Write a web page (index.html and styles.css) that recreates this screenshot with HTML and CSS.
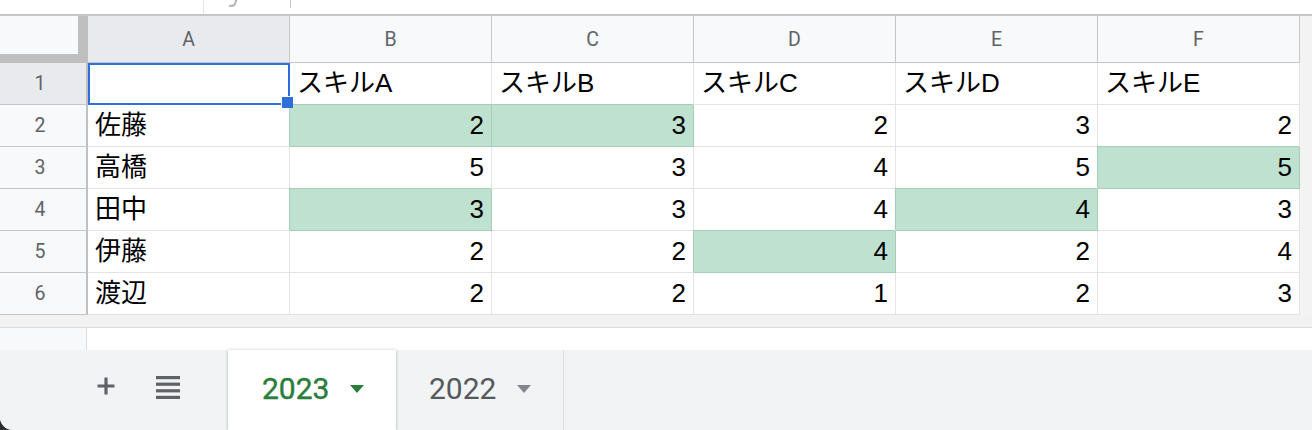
FILE: index.html
```html
<!DOCTYPE html>
<html lang="ja">
<head>
<meta charset="utf-8">
<title>Sheet</title>
<link rel="stylesheet" href="styles.css">
</head>
<body>
<div class="app">
  <div class="toolbar">
    <span class="tb-line tb-line1"></span>
    <svg class="fx-tail" width="14" height="8" viewBox="0 0 14 8"><path d="M9 0 C8.6 4.5 7 6.6 3 5.8" fill="none" stroke="#b4b7bb" stroke-width="2.2" stroke-linecap="round"/></svg>
    <span class="tb-line tb-line2"></span>
  </div>
  <div class="sheet-area">
    <div class="grid">
      <div class="corner"><div class="corner-inner"></div></div>
      <div class="colhead sel">A</div>
      <div class="colhead">B</div>
      <div class="colhead">C</div>
      <div class="colhead">D</div>
      <div class="colhead">E</div>
      <div class="colhead">F</div>

      <div class="rowhead sel">1</div>
      <div class="cell a1"></div>
      <div class="cell">スキルA</div>
      <div class="cell">スキルB</div>
      <div class="cell">スキルC</div>
      <div class="cell">スキルD</div>
      <div class="cell">スキルE</div>

      <div class="rowhead">2</div>
      <div class="cell">佐藤</div>
      <div class="cell num hi">2</div>
      <div class="cell num hi">3</div>
      <div class="cell num">2</div>
      <div class="cell num">3</div>
      <div class="cell num">2</div>

      <div class="rowhead">3</div>
      <div class="cell">高橋</div>
      <div class="cell num">5</div>
      <div class="cell num">3</div>
      <div class="cell num">4</div>
      <div class="cell num">5</div>
      <div class="cell num hi">5</div>

      <div class="rowhead">4</div>
      <div class="cell">田中</div>
      <div class="cell num hi">3</div>
      <div class="cell num">3</div>
      <div class="cell num">4</div>
      <div class="cell num hi">4</div>
      <div class="cell num">3</div>

      <div class="rowhead">5</div>
      <div class="cell">伊藤</div>
      <div class="cell num">2</div>
      <div class="cell num">2</div>
      <div class="cell num hi">4</div>
      <div class="cell num">2</div>
      <div class="cell num">4</div>

      <div class="rowhead">6</div>
      <div class="cell">渡辺</div>
      <div class="cell num">2</div>
      <div class="cell num">2</div>
      <div class="cell num">1</div>
      <div class="cell num">2</div>
      <div class="cell num">3</div>
    </div>
    <div class="vstrip"></div>
  </div>
  <div class="band"></div>
  <div class="blank"><div class="blank-head"></div></div>
  <div class="tabbar">
    <div class="tab-tools">
      <svg class="ico-plus" width="20" height="20" viewBox="0 0 20 20"><path d="M10 1.5v17M1.5 10h17" stroke="#5f6368" stroke-width="3.2" fill="none"/></svg>
      <svg class="ico-menu" width="24" height="24" viewBox="0 0 24 24"><rect x="0" y="1" width="24" height="3.2" fill="#5f6368"/><rect x="0" y="7.6" width="24" height="3.2" fill="#5f6368"/><rect x="0" y="14.2" width="24" height="3.2" fill="#5f6368"/><rect x="0" y="20.8" width="24" height="3.2" fill="#5f6368"/></svg>
    </div>
    <div class="tab active">
      <span class="tab-label">2023</span>
      <span class="tab-arrow"></span>
    </div>
    <div class="tab">
      <span class="tab-label">2022</span>
      <span class="tab-arrow"></span>
    </div>
  </div>
</div>
</body>
</html>
```
FILE: styles.css
```css
* { box-sizing: border-box; }
html, body { margin: 0; padding: 0; }
html { background: #2e2e2e; }
body { width: 1312px; height: 430px; overflow: hidden; }

.app {
  width: 1312px;
  height: 430px;
  background: #ffffff;
  border-bottom-left-radius: 13px;
  overflow: hidden;
  display: flex;
  flex-direction: column;
}

.toolbar {
  height: 14px;
  display: flex;
  align-items: flex-start;
  flex: none;
}
.tb-line { display: block; width: 1px; }
.tb-line1 { margin-left: 203px; height: 14px; background: #e3e3e3; }
.fx-tail { margin-left: 23px; display: block; }
.tb-line2 { margin-left: 49px; height: 8px; background: #c6c6c6; }

.sheet-area {
  display: flex;
  border-top: 2px solid #c4c7c5;
  flex: none;
}
.grid {
  display: grid;
  grid-template-columns: 88px repeat(6, 202px);
  grid-template-rows: 47px repeat(6, 42px);
  font-family: "Liberation Sans", "Noto Sans CJK JP", sans-serif;
}
.vstrip { flex: 1; background: #f3f3f3; }

.corner { background: #bfbfbf; }
.corner-inner { width: 78px; height: 38px; background: #f8f9fa; }

.colhead {
  background: #f8f9fa;
  border-right: 1px solid #c4c7c5;
  border-bottom: 1px solid #c4c7c5;
  color: #5f6368;
  font-family: Roboto, "Liberation Sans", sans-serif;
  font-size: 19.5px;
  display: flex;
  align-items: center;
  justify-content: center;
}
.colhead.sel { background: #e8eaed; }

.rowhead {
  background: #f8f9fa;
  border-right: 2px solid #c0c0c0;
  border-bottom: 1px solid #c4c7c5;
  color: #5f6368;
  font-family: Roboto, "Liberation Sans", sans-serif;
  font-size: 19.5px;
  display: flex;
  align-items: center;
  justify-content: center;
  padding-right: 6px;
}
.rowhead.sel { background: #e8eaed; }

.cell {
  border-right: 1px solid #e2e3e3;
  border-bottom: 1px solid #e2e3e3;
  font-size: 26px;
  line-height: 41px;
  color: #000;
  padding: 0 7px;
  white-space: nowrap;
  background: #fff;
}
.cell.num { text-align: right; padding-right: 7px; }
.cell.hi {
  background: #bfe1cf;
  border-right-color: #a7ccb7;
  border-bottom-color: #a7ccb7;
  box-shadow: -1px -1px 0 0 #a7ccb7;
}

.cell.a1 { position: relative; z-index: 2; }
.cell.a1::before {
  content: "";
  position: absolute;
  left: 0;
  top: 0;
  right: -1px;
  bottom: -1px;
  border: 2px solid #2f6fdb;
}
.cell.a1::after {
  content: "";
  position: absolute;
  right: -4px;
  bottom: -4px;
  width: 11px;
  height: 11px;
  background: #2f6fdb;
  border-top: 1px solid #fff;
  border-left: 1px solid #fff;
}

.band {
  height: 13px;
  background: #f2f2f2;
  border-bottom: 1px solid #dcdcdc;
  flex: none;
}
.blank {
  height: 22px;
  flex: none;
  display: flex;
}
.blank-head {
  width: 87px;
  background: #f8f9fa;
  border-right: 1px solid #dadce0;
}

.tabbar {
  flex: 1;
  background: #f1f3f4;
  display: flex;
  align-items: stretch;
  font-family: Roboto, "Liberation Sans", sans-serif;
}
.tab-tools {
  width: 228px;
  display: flex;
  align-items: center;
  padding-left: 96px;
  padding-bottom: 8px;
  gap: 40px;
}
.ico-plus, .ico-menu { display: block; }
.ico-menu { margin-top: 1px; }

.tab {
  width: 168px;
  display: flex;
  align-items: center;
  padding-left: 33px;
  padding-bottom: 4px;
  gap: 21px;
  color: #55595e;
  font-size: 30px;
  border-right: 1px solid #dadce0;
}
.tab.active {
  background: #fff;
  color: #2a7d3a;
  padding-left: 34px;
  border-right: none;
  position: relative;
  box-shadow: 0 0 3px rgba(60, 64, 67, 0.25), 0 1px 2px rgba(60, 64, 67, 0.2);
}
.tab-label { display: block; letter-spacing: 0; }
.tab.active .tab-label { -webkit-text-stroke: 0.4px #2a7d3a; }
.tab-arrow {
  display: block;
  width: 0;
  height: 0;
  border-left: 7px solid transparent;
  border-right: 7px solid transparent;
  border-top: 8px solid #80868b;
  margin-top: 2px;
}
.tab.active .tab-arrow { border-top-color: #2a7d3a; }
```
